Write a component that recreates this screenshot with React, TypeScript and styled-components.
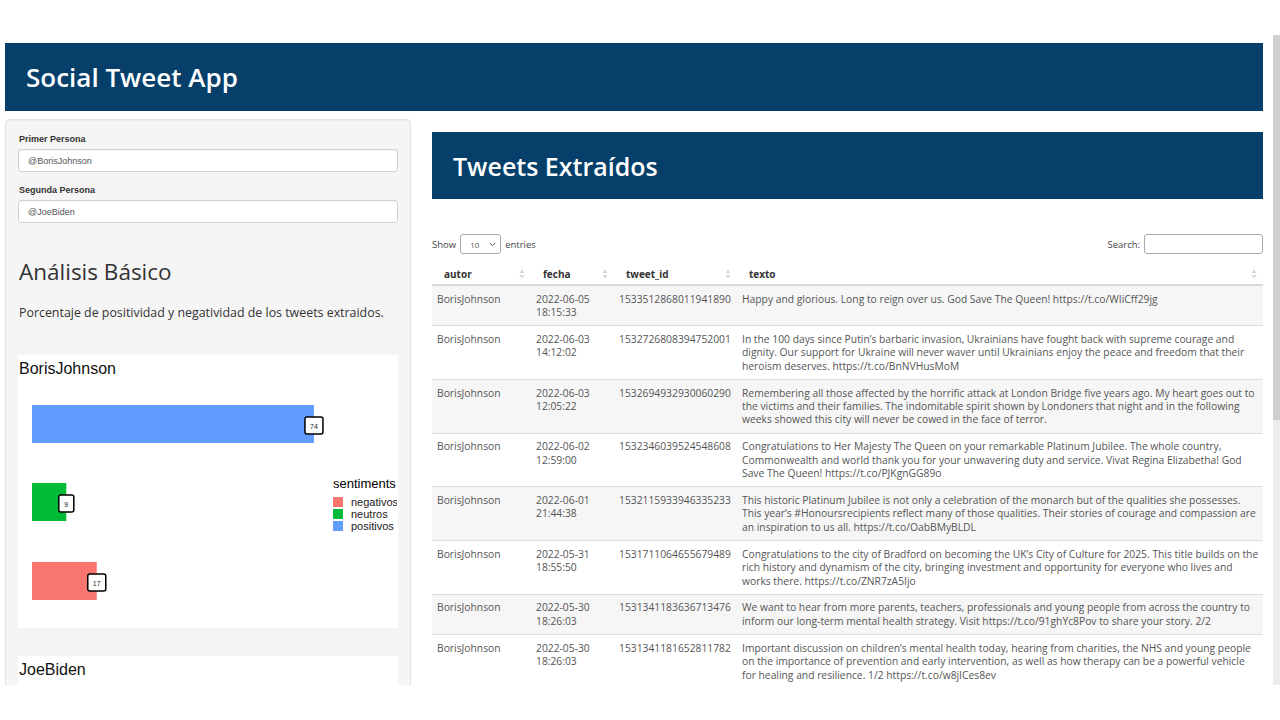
import React from 'react';
import styled, { createGlobalStyle } from 'styled-components';

const Colors = {
  navy: '#053f6a',
  panel: '#f5f5f5',
  panelBorder: '#e3e3e3',
  text: '#333333',
  cell: '#555555',
  rowLine: '#dddddd',
  stripe: '#f6f6f6',
  neg: '#F8766D',
  neu: '#00BA38',
  pos: '#619CFF',
};

const poppinsLike = `"Open Sans", "Liberation Sans", sans-serif`;
const arialLike = `"Liberation Sans", Arial, sans-serif`;

const GlobalStyle = createGlobalStyle`
  html, body {
    margin: 0;
    padding: 0;
    background: #ffffff;
  }
  body {
    font-family: ${poppinsLike};
    color: ${Colors.text};
  }
  * { box-sizing: border-box; }
`;

type Tweet = { date: string; time: string; id: string; lines: string[] };

const tweets: Tweet[] = [
  {
    date: '2022-06-05', time: '18:15:33', id: '1533512868011941890',
    lines: ['Happy and glorious. Long to reign over us. God Save The Queen! https://t.co/WIiCff29jg'],
  },
  {
    date: '2022-06-03', time: '14:12:02', id: '1532726808394752001',
    lines: [
      'In the 100 days since Putin’s barbaric invasion, Ukrainians have fought back with supreme courage and',
      'dignity. Our support for Ukraine will never waver until Ukrainians enjoy the peace and freedom that their',
      'heroism deserves. https://t.co/BnNVHusMoM',
    ],
  },
  {
    date: '2022-06-03', time: '12:05:22', id: '1532694932930060290',
    lines: [
      'Remembering all those affected by the horrific attack at London Bridge five years ago. My heart goes out to',
      'the victims and their families. The indomitable spirit shown by Londoners that night and in the following',
      'weeks showed this city will never be cowed in the face of terror.',
    ],
  },
  {
    date: '2022-06-02', time: '12:59:00', id: '1532346039524548608',
    lines: [
      'Congratulations to Her Majesty The Queen on your remarkable Platinum Jubilee. The whole country,',
      'Commonwealth and world thank you for your unwavering duty and service. Vivat Regina Elizabetha! God',
      'Save The Queen! https://t.co/PJKgnGG89o',
    ],
  },
  {
    date: '2022-06-01', time: '21:44:38', id: '1532115933946335233',
    lines: [
      'This historic Platinum Jubilee is not only a celebration of the monarch but of the qualities she possesses.',
      'This year’s #Honoursrecipients reflect many of those qualities. Their stories of courage and compassion are',
      'an inspiration to us all. https://t.co/OabBMyBLDL',
    ],
  },
  {
    date: '2022-05-31', time: '18:55:50', id: '1531711064655679489',
    lines: [
      'Congratulations to the city of Bradford on becoming the UK’s City of Culture for 2025. This title builds on the',
      'rich history and dynamism of the city, bringing investment and opportunity for everyone who lives and',
      'works there. https://t.co/ZNR7zA5Ijo',
    ],
  },
  {
    date: '2022-05-30', time: '18:26:03', id: '1531341183636713476',
    lines: [
      'We want to hear from more parents, teachers, professionals and young people from across the country to',
      'inform our long-term mental health strategy. Visit https://t.co/91ghYc8Pov to share your story. 2/2',
    ],
  },
  {
    date: '2022-05-30', time: '18:26:03', id: '1531341181652811782',
    lines: [
      'Important discussion on children’s mental health today, hearing from charities, the NHS and young people',
      'on the importance of prevention and early intervention, as well as how therapy can be a powerful vehicle',
      'for healing and resilience. 1/2 https://t.co/w8jICes8ev',
    ],
  },
];

const sentiments = [
  { key: 'negativos', color: Colors.neg },
  { key: 'neutros', color: Colors.neu },
  { key: 'positivos', color: Colors.pos },
];

const SortIcon = () => (
  <svg width="6" height="10" viewBox="0 0 6 10">
    <path d="M3 0.5 L5.5 4 H0.5 Z" fill="#d6d6d6" />
    <path d="M3 9.5 L5.5 6 H0.5 Z" fill="#d6d6d6" />
  </svg>
);

const Chevron = () => (
  <svg width="7" height="5" viewBox="0 0 7 5">
    <path d="M0.8 0.9 L3.5 3.7 L6.2 0.9" fill="none" stroke="#555" strokeWidth="1" />
  </svg>
);

const Label = ({ x, y, w, text }: { x: number; y: number; w: number; text: string }) => (
  <g>
    <rect x={x} y={y} width={w} height={17} rx={2} fill="#fff" stroke="#000" strokeWidth={1.5} />
    <text x={x + w / 2} y={y + 11.5} fontSize="7" textAnchor="middle" fill="#222" fontFamily="Liberation Sans, Arial, sans-serif">{text}</text>
  </g>
);

const BarChart = () => {
  const scale = 3.81;
  const bars = [
    { value: 74, y: 27, color: Colors.pos },
    { value: 9, y: 105, color: Colors.neu },
    { value: 17, y: 184, color: Colors.neg },
  ];
  return (
    <svg width="379" height="250" viewBox="0 0 379 250">
      {bars.map((b) => {
        const end = 14 + b.value * scale;
        const w = b.value >= 10 ? 18 : 15;
        return (
          <g key={b.value}>
            <rect x={14} y={b.y} width={b.value * scale} height={38} fill={b.color} />
            <Label x={end - w / 2} y={b.y + 12} w={w} text={String(b.value)} />
          </g>
        );
      })}
      <g fontFamily="Liberation Sans, Arial, sans-serif">
        <text x={315} y={110} fontSize="13" fill="#000">sentiments</text>
        {sentiments.map((s, i) => (
          <g key={s.key}>
            <rect x={315} y={119 + i * 12} width={10} height={10} fill={s.color} />
            <text x={333} y={128 + i * 12} fontSize="11" fill="#222">{s.key}</text>
          </g>
        ))}
      </g>
    </svg>
  );
};

const App: React.FC = () => {
  return (
    <>
      <GlobalStyle />
      <Viewport>
        <Content>
          <TopBar>
            <AppTitle>Social Tweet App</AppTitle>
          </TopBar>
          <Columns>
            <Sidebar>
              <Field>
                <FieldLabel>Primer Persona</FieldLabel>
                <TextInput defaultValue="@BorisJohnson" readOnly />
              </Field>
              <Field>
                <FieldLabel>Segunda Persona</FieldLabel>
                <TextInput defaultValue="@JoeBiden" readOnly />
              </Field>
              <SectionTitle>Análisis Básico</SectionTitle>
              <Lead>Porcentaje de positividad y negatividad de los tweets extraidos.</Lead>
              <ChartCard>
                <ChartTitle>BorisJohnson</ChartTitle>
                <BarChart />
              </ChartCard>
              <ChartCard $spaced>
                <ChartTitle>JoeBiden</ChartTitle>
              </ChartCard>
            </Sidebar>

            <Main>
              <TitleBox>
                <BoxTitle>Tweets Extraídos</BoxTitle>
              </TitleBox>
              <Controls>
                <ControlGroup>
                  Show
                  <Select>
                    <span>10</span>
                    <Chevron />
                  </Select>
                  entries
                </ControlGroup>
                <ControlGroup>
                  Search:
                  <SearchBox />
                </ControlGroup>
              </Controls>
              <Table>
                <colgroup>
                  <col style={{ width: 99 }} />
                  <col style={{ width: 83 }} />
                  <col style={{ width: 123 }} />
                  <col />
                </colgroup>
                <thead>
                  <tr>
                    {['autor', 'fecha', 'tweet_id', 'texto'].map((h) => (
                      <Th key={h}>
                        <HeadInner>
                          <span>{h}</span>
                          <SortIcon />
                        </HeadInner>
                      </Th>
                    ))}
                  </tr>
                </thead>
                <tbody>
                  {tweets.map((t) => (
                    <Row key={t.id}>
                      <Td>BorisJohnson</Td>
                      <Td>
                        {t.date}
                        <br />
                        {t.time}
                      </Td>
                      <Td>{t.id}</Td>
                      <Td>
                        {t.lines.map((l) => (
                          <Line key={l}>{l}</Line>
                        ))}
                      </Td>
                    </Row>
                  ))}
                </tbody>
              </Table>
            </Main>
          </Columns>
        </Content>
        <Scrollbar>
          <Thumb />
        </Scrollbar>
      </Viewport>
    </>
  );
};

const Viewport = styled.div`
  margin-top: 35px;
  height: 650px;
  display: flex;
  overflow: hidden;
`;

const Content = styled.div`
  flex: 1;
  min-width: 0;
  padding: 8px 10px 0 5px;
  overflow: hidden;
`;

const Scrollbar = styled.div`
  width: 7px;
  background: #ececec;
`;

const Thumb = styled.div`
  height: 385px;
  background: #cfcfcf;
`;

const TopBar = styled.header`
  height: 68px;
  background: ${Colors.navy};
  display: flex;
  align-items: center;
  padding-left: 21px;
`;

const AppTitle = styled.h1`
  margin: 0;
  color: #fff;
  font-size: 26px;
  font-weight: 600;
  line-height: 30px;
`;

const Columns = styled.div`
  display: grid;
  grid-template-columns: 406px 1fr;
  column-gap: 21px;
  align-items: start;
`;

const Sidebar = styled.aside`
  margin-top: 8px;
  background: ${Colors.panel};
  border: 1px solid ${Colors.panelBorder};
  border-radius: 4px;
  padding: 13px 12px 40px;
  box-shadow: inset 0 1px 1px rgba(0, 0, 0, 0.04);
`;

const Field = styled.div`
  margin-bottom: 12px;
`;

const FieldLabel = styled.label`
  display: block;
  font-family: ${arialLike};
  font-weight: bold;
  font-size: 9px;
  line-height: 12px;
  color: #333;
  margin: 0 0 4px 1px;
`;

const TextInput = styled.input`
  display: block;
  width: 100%;
  height: 23px;
  border: 1px solid #d2d2d2;
  border-radius: 3px;
  padding: 0 9px;
  font-family: ${arialLike};
  font-size: 9px;
  color: #555;
  background: #fff;
  box-shadow: inset 0 1px 1px rgba(0, 0, 0, 0.05);
  outline: none;
`;

const SectionTitle = styled.h2`
  margin: 38px 0 0 1px;
  font-size: 22.5px;
  line-height: 22px;
  font-weight: 500;
  color: #333;
`;

const Lead = styled.p`
  margin: 21px 0 0 1px;
  font-size: 12.4px;
  line-height: 17px;
  color: #333;
`;

const ChartCard = styled.div<{ $spaced?: boolean }>`
  margin-top: ${(p) => (p.$spaced ? '28px' : '34px')};
  background: #fff;
  height: 273px;
`;

const ChartTitle = styled.div`
  padding: 4px 0 0 1px;
  font-family: ${arialLike};
  font-size: 16px;
  line-height: 19px;
  color: #111;
`;

const Main = styled.main`
  padding-top: 21px;
`;

const TitleBox = styled.div`
  height: 67px;
  background: ${Colors.navy};
  display: flex;
  align-items: center;
  padding-left: 21px;
`;

const BoxTitle = styled.h2`
  margin: 0;
  color: #fff;
  font-size: 25px;
  font-weight: 600;
  line-height: 30px;
`;

const Controls = styled.div`
  margin-top: 35px;
  height: 20px;
  display: flex;
  justify-content: space-between;
  align-items: center;
  font-size: 9.5px;
  color: #444;
`;

const ControlGroup = styled.div`
  display: flex;
  align-items: center;
  gap: 4px;
`;

const Select = styled.div`
  width: 41px;
  height: 20px;
  border: 1px solid #aaa;
  border-radius: 3px;
  display: flex;
  align-items: center;
  justify-content: space-between;
  padding: 0 4px 0 9px;
  font-size: 8px;
  color: #555;
`;

const SearchBox = styled.div`
  width: 119px;
  height: 20px;
  border: 1px solid #aaa;
  border-radius: 3px;
  background: #fff;
`;

const Table = styled.table`
  margin-top: 10px;
  width: 100%;
  table-layout: fixed;
  border-collapse: collapse;
`;

const Th = styled.th`
  height: 21px;
  padding: 0 6px 0 12px;
  text-align: left;
  font-size: 10px;
  font-weight: 700;
  color: #333;
  border-bottom: 2px solid #d9d9d9;
`;

const HeadInner = styled.div`
  display: flex;
  align-items: center;
  justify-content: space-between;
`;

const Row = styled.tr`
  &:nth-child(odd) {
    background: ${Colors.stripe};
  }
`;

const Td = styled.td`
  padding: 6.5px 5px 6px;
  vertical-align: top;
  font-size: 10.3px;
  line-height: 13.4px;
  color: ${Colors.cell};
  border-top: 1px solid ${Colors.rowLine};
  overflow: hidden;
`;

const Line = styled.span`
  display: block;
  white-space: nowrap;
`;

export default App;
